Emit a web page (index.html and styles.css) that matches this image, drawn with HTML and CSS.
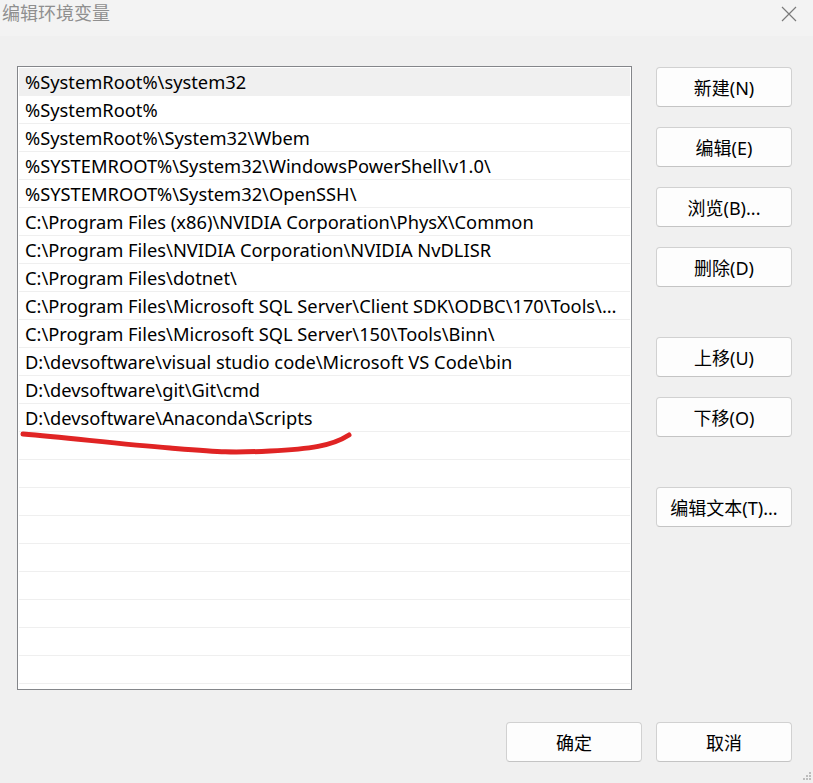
FILE: index.html
```html
<!DOCTYPE html>
<html lang="zh-CN">
<head>
<meta charset="utf-8">
<title>编辑环境变量</title>
<link rel="stylesheet" href="styles.css">
</head>
<body>
<div class="dialog">
  <div class="titlebar">
    <span class="title">编辑环境变量</span>
    <svg class="close" width="16" height="16" viewBox="0 0 16 16"><path d="M1 1 L15 15 M15 1 L1 15" stroke="#7a7a7a" stroke-width="1.2" fill="none"/></svg>
  </div>
  <div class="content">
    <div class="main">
      <div class="list">
        <div class="row selected">%SystemRoot%\system32</div>
        <div class="row">%SystemRoot%</div>
        <div class="row">%SystemRoot%\System32\Wbem</div>
        <div class="row">%SYSTEMROOT%\System32\WindowsPowerShell\v1.0\</div>
        <div class="row">%SYSTEMROOT%\System32\OpenSSH\</div>
        <div class="row">C:\Program Files (x86)\NVIDIA Corporation\PhysX\Common</div>
        <div class="row">C:\Program Files\NVIDIA Corporation\NVIDIA NvDLISR</div>
        <div class="row">C:\Program Files\dotnet\</div>
        <div class="row">C:\Program Files\Microsoft SQL Server\Client SDK\ODBC\170\Tools\Binn\</div>
        <div class="row">C:\Program Files\Microsoft SQL Server\150\Tools\Binn\</div>
        <div class="row">D:\devsoftware\visual studio code\Microsoft VS Code\bin</div>
        <div class="row">D:\devsoftware\git\Git\cmd</div>
        <div class="row">D:\devsoftware\Anaconda\Scripts</div>
        <div class="row"></div>
        <div class="row"></div>
        <div class="row"></div>
        <div class="row"></div>
        <div class="row"></div>
        <div class="row"></div>
        <div class="row"></div>
        <div class="row"></div>
        <div class="row"></div>
      </div>
      <div class="side">
        <div class="group">
          <button class="btn">新建(N)</button>
          <button class="btn">编辑(E)</button>
          <button class="btn">浏览(B)...</button>
          <button class="btn">删除(D)</button>
        </div>
        <div class="group">
          <button class="btn">上移(U)</button>
          <button class="btn">下移(O)</button>
        </div>
        <div class="group">
          <button class="btn">编辑文本(T)...</button>
        </div>
      </div>
    </div>
    <div class="footer">
      <button class="btn">确定</button>
      <button class="btn">取消</button>
    </div>
  </div>
  <svg class="scribble" width="340" height="34" viewBox="0 0 340 34"><path d="M3 6 C 50 10, 100 16, 150 20 S 210 25, 250 23 S 312 18, 329 7" stroke="#e02424" stroke-width="5" fill="none" stroke-linecap="round" stroke-linejoin="round"/></svg>
  <svg class="grip" width="10" height="10" viewBox="0 0 10 10" fill="#bdbdbd"><rect x="7" y="0" width="2" height="2"/><rect x="4" y="3" width="2" height="2"/><rect x="7" y="3" width="2" height="2"/><rect x="1" y="6" width="2" height="2"/><rect x="4" y="6" width="2" height="2"/><rect x="7" y="6" width="2" height="2"/></svg>
</div>
</body>
</html>
```
FILE: styles.css
```css
html, body {
  margin: 0;
  padding: 0;
  background: #f0f0f0;
}
body {
  font-family: "Noto Sans", "Noto Sans CJK SC", sans-serif;
  color: #000;
}
.dialog {
  position: relative;
  width: 813px;
  height: 783px;
  overflow: hidden;
}
.titlebar {
  height: 36px;
  background: #f3f3f3;
  display: flex;
  align-items: center;
  justify-content: space-between;
  padding: 0 16px 0 2px;
  box-sizing: border-box;
}
.title {
  font-family: "Noto Sans CJK SC", sans-serif;
  font-size: 18px;
  color: #8f8f8f;
  margin-top: -12px;
}
.close {
  margin-top: -8px;
}
.content {
  padding: 30px 21px 0 17px;
}
.main {
  display: flex;
  gap: 24px;
}
.list {
  width: 616px;
  height: 624px;
  box-sizing: border-box;
  border: 1px solid #84868a;
  background: #fff;
  padding: 1px 1px 0 1px;
  overflow: hidden;
}
.row {
  height: 28px;
  box-sizing: border-box;
  border-bottom: 1px solid #efefef;
  padding: 0 10px 0 6px;
  font-size: 18.3px;
  line-height: 27px;
  white-space: nowrap;
  overflow: hidden;
  text-overflow: ellipsis;
}
.row.selected {
  background: #f0f0f0;
  border-bottom-color: #f0f0f0;
}
.side {
  display: flex;
  flex-direction: column;
  gap: 50px;
  padding-top: 1px;
}
.group {
  display: flex;
  flex-direction: column;
  gap: 20px;
}
.btn {
  width: 136px;
  height: 40px;
  box-sizing: border-box;
  border: 1px solid #d1d1d1;
  border-bottom-color: #c4c4c4;
  border-radius: 4px;
  background: #fdfdfd;
  font-family: "Noto Sans", "Noto Sans CJK SC", sans-serif;
  font-size: 18px;
  color: #000;
  padding: 0;
}
.footer {
  display: flex;
  justify-content: flex-end;
  gap: 14px;
  margin-top: 32px;
}
.scribble {
  position: absolute;
  left: 20px;
  top: 428px;
}
.grip {
  position: absolute;
  right: 1px;
  bottom: 1px;
}
```
